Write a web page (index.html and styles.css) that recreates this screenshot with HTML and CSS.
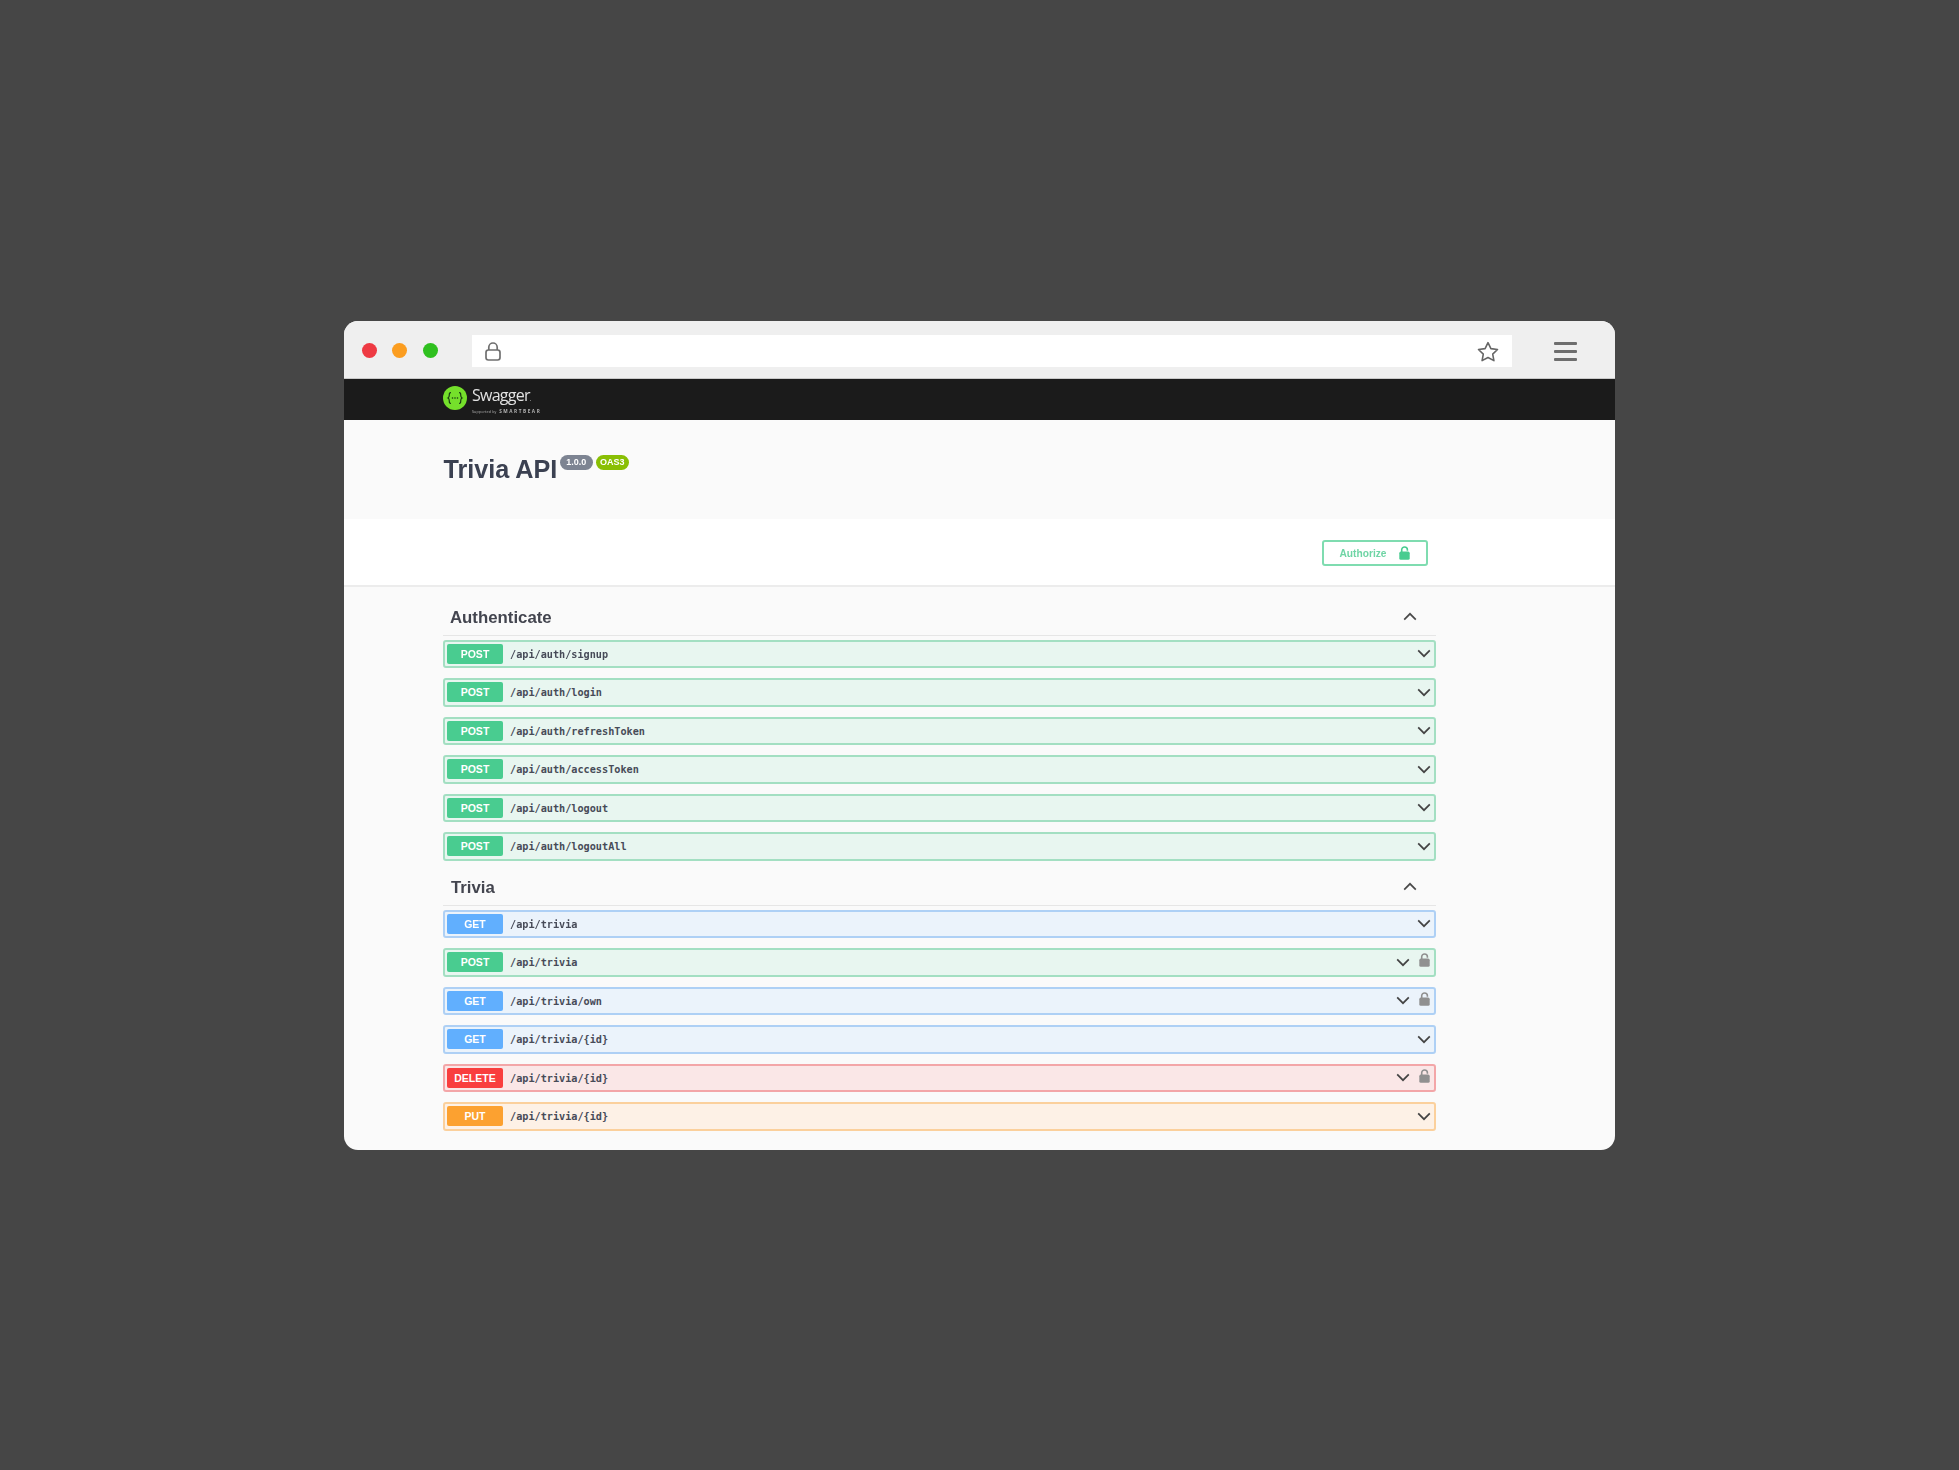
FILE: index.html
```html
<!DOCTYPE html>
<html lang="en">
<head>
<meta charset="utf-8">
<title>Trivia API</title>
<link rel="stylesheet" href="styles.css">
</head>
<body>
<svg class="defs" width="0" height="0" aria-hidden="true">
  <symbol id="lock-open" viewBox="0 0 11 14"><path d="M2.7 6.5V3.8a2.85 2.85 0 0 1 5.7 0v1" fill="none" stroke="currentColor" stroke-width="1.6"/><rect x="0.3" y="5.6" width="10.4" height="8.2" rx="1.6" fill="currentColor"/></symbol>
  <symbol id="chev" viewBox="0 0 14 9"><path d="M1.2 1.4 7 7.2l5.8-5.8" fill="none" stroke="currentColor" stroke-width="1.7"/></symbol>
</svg>
<div class="window">
  <header class="chrome">
    <div class="dots"><span class="dot red"></span><span class="dot orange"></span><span class="dot green"></span></div>
    <div class="address">
      <svg class="addr-lock" viewBox="0 0 16 19" width="16" height="19"><path d="M3.8 8V5.2a4.2 4.2 0 0 1 8.4 0V8" fill="none" stroke="#6f6f6f" stroke-width="1.7"/><rect x="1" y="8" width="14" height="10" rx="2.4" fill="none" stroke="#6f6f6f" stroke-width="1.7"/></svg>
      <svg class="star" viewBox="0 0 22 21" width="22" height="21"><path d="M11 1.6l2.9 6 6.6.9-4.8 4.6 1.2 6.5L11 16.5l-5.9 3.1 1.2-6.5L1.5 8.5l6.6-.9z" fill="none" stroke="#666" stroke-width="1.6" stroke-linejoin="round"/></svg>
    </div>
    <div class="burger"><i></i><i></i><i></i></div>
  </header>
  <nav class="topbar">
    <svg class="logo-mark" viewBox="0 0 24 24" width="24" height="24"><circle cx="12" cy="12" r="12" fill="#75e02b"/><path d="M8 6.6c-1.8 0-1.7 1.2-1.7 2.4s0 2.4-1.3 3c1.3.6 1.3 1.8 1.3 3s-.1 2.4 1.7 2.4M16 6.6c1.8 0 1.7 1.2 1.7 2.4s0 2.4 1.3 3c-1.3.6-1.3 1.8-1.3 3s.1 2.4-1.7 2.4" fill="none" stroke="#173a12" stroke-width="1.2"/><circle cx="9.5" cy="12" r=".8" fill="#173a12"/><circle cx="12" cy="12" r=".8" fill="#173a12"/><circle cx="14.5" cy="12" r=".8" fill="#173a12"/></svg>
    <div class="logo-text">
      <span class="logo-name">Swagger<small>.</small></span>
      <span class="logo-sub"><em>Supported by</em> SMARTBEAR</span>
    </div>
  </nav>
  <section class="info">
    <h1 class="title">Trivia API</h1>
    <span class="pill pill-version">1.0.0</span>
    <span class="pill pill-oas">OAS3</span>
  </section>
  <section class="schemes">
    <button class="authorize">Authorize<svg class="auth-lock"><use href="#lock-open"/></svg></button>
  </section>
  <main class="content">
    <div class="tag">
      <div class="tag-head"><h2>Authenticate</h2><svg class="chev-up"><use href="#chev"/></svg></div>
      <div class="ops">
        <div class="op post"><span class="method">POST</span><span class="path">/api/auth/signup</span><svg class="chev"><use href="#chev"/></svg></div>
        <div class="op post"><span class="method">POST</span><span class="path">/api/auth/login</span><svg class="chev"><use href="#chev"/></svg></div>
        <div class="op post"><span class="method">POST</span><span class="path">/api/auth/refreshToken</span><svg class="chev"><use href="#chev"/></svg></div>
        <div class="op post"><span class="method">POST</span><span class="path">/api/auth/accessToken</span><svg class="chev"><use href="#chev"/></svg></div>
        <div class="op post"><span class="method">POST</span><span class="path">/api/auth/logout</span><svg class="chev"><use href="#chev"/></svg></div>
        <div class="op post"><span class="method">POST</span><span class="path">/api/auth/logoutAll</span><svg class="chev"><use href="#chev"/></svg></div>
      </div>
    </div>
    <div class="tag">
      <div class="tag-head tag-head-b"><h2>Trivia</h2><svg class="chev-up"><use href="#chev"/></svg></div>
      <div class="ops">
        <div class="op get"><span class="method">GET</span><span class="path">/api/trivia</span><svg class="chev"><use href="#chev"/></svg></div>
        <div class="op post"><span class="method">POST</span><span class="path">/api/trivia</span><svg class="chev"><use href="#chev"/></svg><svg class="op-lock"><use href="#lock-open"/></svg></div>
        <div class="op get"><span class="method">GET</span><span class="path">/api/trivia/own</span><svg class="chev"><use href="#chev"/></svg><svg class="op-lock"><use href="#lock-open"/></svg></div>
        <div class="op get"><span class="method">GET</span><span class="path">/api/trivia/{id}</span><svg class="chev"><use href="#chev"/></svg></div>
        <div class="op delete"><span class="method">DELETE</span><span class="path">/api/trivia/{id}</span><svg class="chev"><use href="#chev"/></svg><svg class="op-lock"><use href="#lock-open"/></svg></div>
        <div class="op put"><span class="method">PUT</span><span class="path">/api/trivia/{id}</span><svg class="chev"><use href="#chev"/></svg></div>
      </div>
    </div>
  </main>
</div>
</body>
</html>
```

FILE: styles.css
```css
* { box-sizing: border-box; }
html, body { margin: 0; height: 100%; }
body { background: #464646; padding: 320.5px 0 0 344px; font-family: "Liberation Sans", Arial, sans-serif; color: #3b4151; overflow: hidden; }
.defs { position: absolute; }

.window { width: 1271px; height: 829px; border-radius: 14px; overflow: hidden; background: #fafafa; display: flex; flex-direction: column; filter: blur(.6px); }

.chrome { height: 58.5px; flex: none; background: #efefef; border-bottom: 1.5px solid #c9c9c9; display: flex; align-items: flex-start; padding-top: 14.5px; }
.dots { display: flex; gap: 15.5px; padding: 8px 0 0 17.5px; width: 127.5px; }
.dot { width: 15px; height: 15px; border-radius: 50%; }
.red { background: #ee3a43; }
.orange { background: #fb9d20; }
.green { background: #2fc01f; }
.address { width: 1040.5px; height: 32px; background: #fff; display: flex; align-items: center; justify-content: space-between; padding: 0 13px 0 13px; }
.burger { margin-left: 42px; width: 23px; display: flex; flex-direction: column; gap: 5.5px; padding-top: 7px; }
.burger i { display: block; height: 2.5px; background: #6e6e6e; border-radius: 1px; }

.topbar { height: 41px; flex: none; background: #1b1b1b; display: flex; align-items: center; padding-left: 99px; gap: 5px; }
.logo-mark { flex: none; margin-top: -3px; }
.logo-text { display: flex; flex-direction: column; color: #e2e2e2; margin-top: 2px; }
.logo-name { font: 400 16px/17px "Open Sans", sans-serif; letter-spacing: -.75px; }
.logo-name small { font-size: 6px; }
.logo-sub { font: 700 4.7px/6px "Open Sans", sans-serif; letter-spacing: 1.55px; color: #b4b4b4; }
.logo-sub em { font-style: normal; font-weight: 400; font-size: 3.6px; letter-spacing: .15px; }

.info { height: 99px; flex: none; display: flex; align-items: flex-start; padding: 34px 0 0 99.5px; background: #fafafa; }
.title { margin: 0; font-size: 25.2px; font-weight: 700; line-height: 30px; color: #3b4151; margin-right: 2.5px; }
.pill { height: 15px; width: 33px; margin-top: 1px; border-radius: 8px; color: #fff; font-size: 9px; font-weight: 700; line-height: 15px; text-align: center; margin-right: 3px; }
.pill-version { background: #7d8492; }
.pill-oas { background: #89bf04; }

.schemes { height: 67.5px; flex: none; background: #fff; border-bottom: 2px solid #ececec; display: flex; align-items: flex-start; justify-content: flex-end; padding: 21px 187.5px 0 0; }
.authorize { width: 106px; height: 26px; background: #fff; border: 2px solid #7fdcb0; border-radius: 3px; color: #6fd5a5; font: 700 10.2px "Liberation Sans", sans-serif; display: flex; align-items: center; padding: 0 0 0 16px; }
.auth-lock { width: 11px; height: 14px; margin-left: 13px; color: #49cc90; }

.content { padding: 0 179.5px 0 99px; display: flex; flex-direction: column; }
.tag-head { height: 49.5px; display: flex; align-items: center; justify-content: space-between; padding: 13.5px 19px 0 7px; border-bottom: 1.5px solid #e6e6e6; margin-bottom: 3.5px; }
.tag-head-b { height: 45.5px; padding: 10.5px 19px 0 8px; }
.tag-head h2 { margin: 0; font-size: 16.8px; font-weight: 700; color: #43454f; }
.chev-up { width: 14px; height: 9px; transform: rotate(180deg); color: #4a4a4a; margin-top: -3px; }

.ops { display: flex; flex-direction: column; gap: 10px; }
.op { height: 28.5px; border: 2px solid; border-radius: 3px; display: flex; align-items: center; padding-left: 2px; }
.post { background: #e8f6f0; border-color: #a3dfc2; }
.get { background: #ebf3fb; border-color: #aed0f5; }
.delete { background: #fae7e7; border-color: #f3a6a8; }
.put { background: #fdf1e6; border-color: #fbd09c; }
.post .method { background: #49cc90; }
.get .method { background: #61affe; }
.delete .method { background: #f93e3e; }
.put .method { background: #fca130; }
.method { width: 56px; height: 20px; border-radius: 2px; color: #fff; font-size: 10.5px; font-weight: 700; line-height: 20px; text-align: center; flex: none; }
.path { margin-left: 7px; padding-top: 1px; font: 700 10.2px "DejaVu Sans Mono", "Liberation Mono", monospace; color: #474b58; }
.chev { width: 14px; height: 9px; margin-left: auto; margin-right: 3px; color: #444; flex: none; }
.op-lock { width: 11px; height: 14px; flex: none; color: #909090; margin: -4px 4px 0 5.5px; }
```
